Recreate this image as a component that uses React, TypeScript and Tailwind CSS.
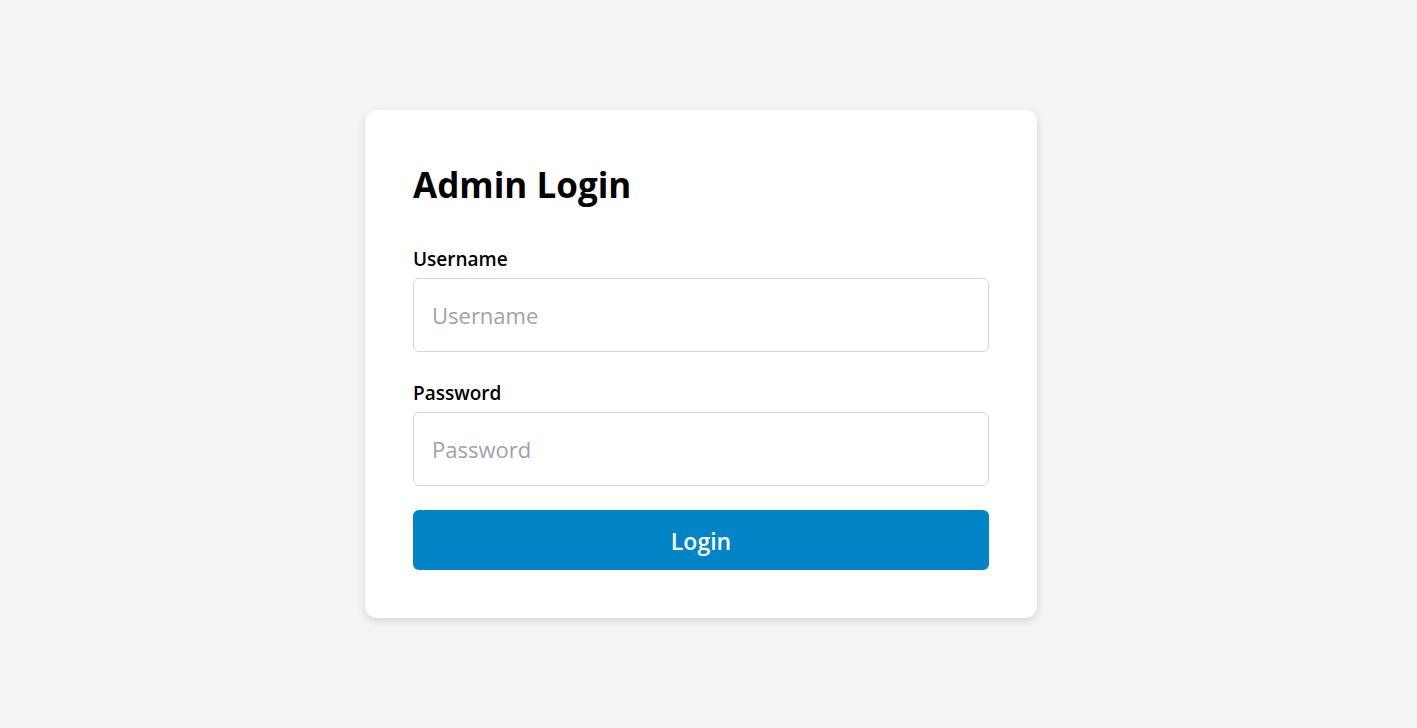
export default function App() {
  return (
    <div className="min-h-screen bg-[#f3f4f6] flex items-center justify-center pr-[15px] font-['Open_Sans',sans-serif]">
      <div className="w-[672px] bg-white rounded-xl shadow-[0_3px_8px_rgba(0,0,0,0.12)] p-12">
        <h1 className="pt-[3px] text-[35px] leading-[48px] font-bold text-black mb-[36px]">Admin Login</h1>
        <form className="flex flex-col" onSubmit={(e) => e.preventDefault()}>
          <label htmlFor="username" className="text-[19px] leading-7 font-semibold text-black mb-[5px]">
            Username
          </label>
          <input
            id="username"
            type="text"
            placeholder="Username"
            className="h-[74px] px-[18px] border border-[#d1d5db] rounded-md text-[22px] text-black placeholder:text-[#9ca3af] outline-none"
          />
          <label htmlFor="password" className="mt-[27px] text-[19px] leading-7 font-semibold text-black mb-[5px]">
            Password
          </label>
          <input
            id="password"
            type="password"
            placeholder="Password"
            className="h-[74px] px-[18px] border border-[#d1d5db] rounded-md text-[22px] text-black placeholder:text-[#9ca3af] outline-none"
          />
          <button
            type="submit"
            className="mt-6 h-[60px] pt-[3px] bg-[#0284c7] text-white text-[23px] font-semibold rounded-md"
          >
            Login
          </button>
        </form>
      </div>
    </div>
  );
}
